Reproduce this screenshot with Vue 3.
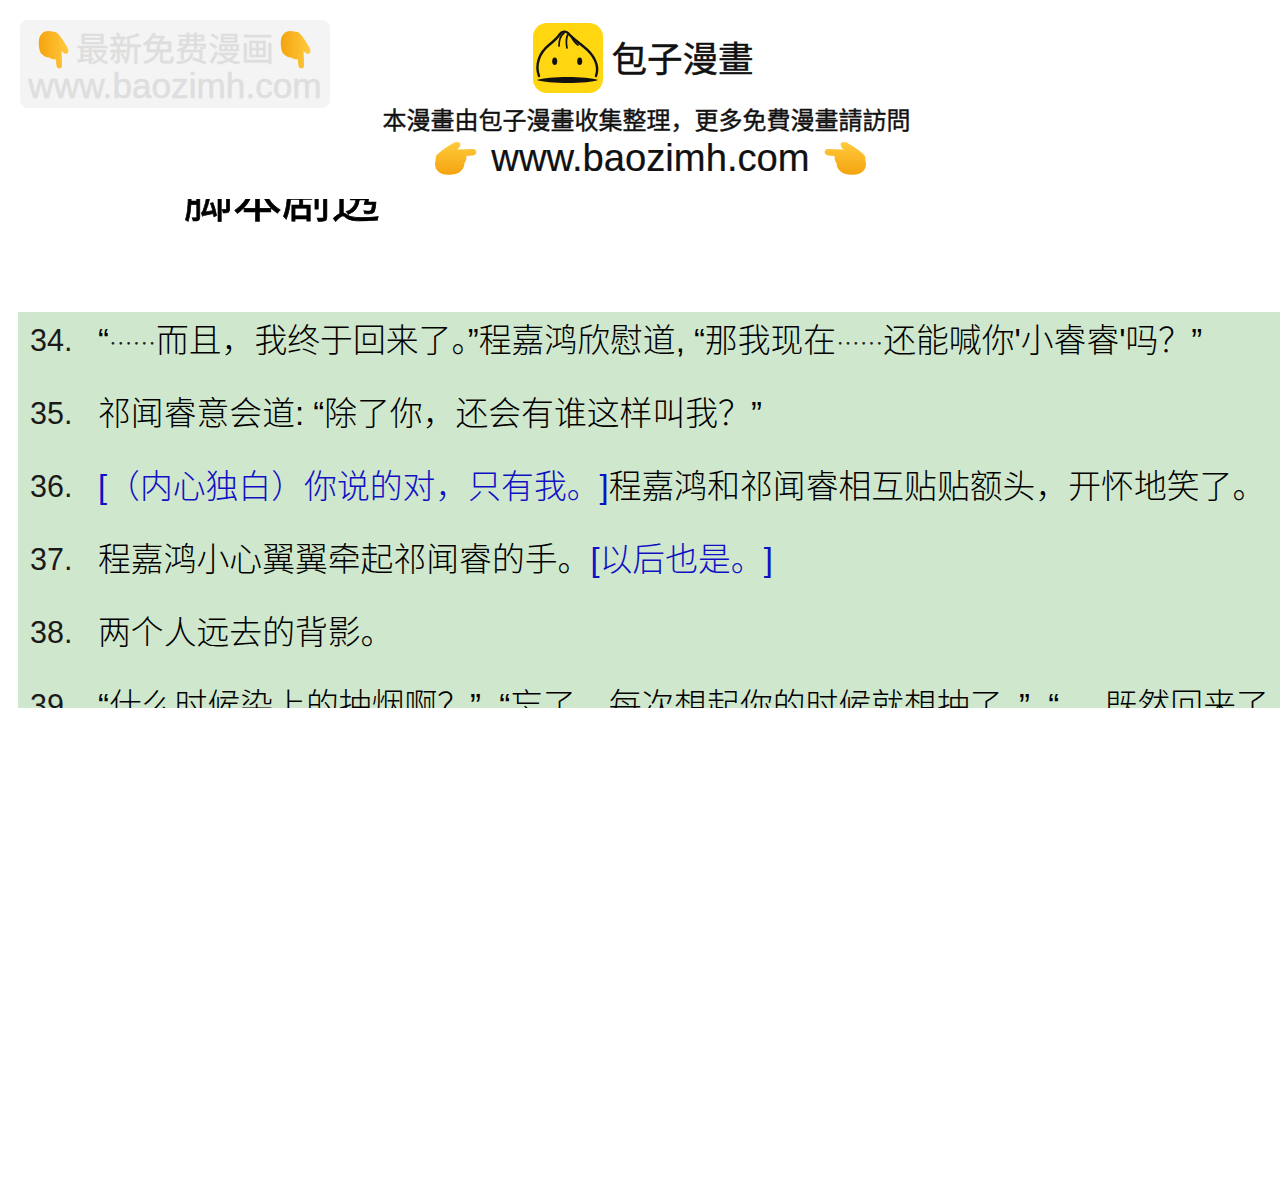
<script setup>
const handPath = 'M1 14C5 9 12 5 18 1.500C21 0 25 1 24 4C23.500 6 22 7 21 8L36 7.500C40.500 7.500 40.500 13 36 13.500L30 14C30 18 29 20 28 21C28 25 26 27 25 28C23 31 18 32 12 32C5 32 0 28 0 22Z'
const rows = [
  { n: '34.', parts: [
    { t: '“' }, { t: '……', k: 'ell' }, { t: '而且，我终于回来了。”程嘉鸿欣慰道, “那我现在' }, { t: '……', k: 'ell' }, { t: '还能喊你\'小睿睿\'吗？”' }
  ] },
  { n: '35.', parts: [{ t: '祁闻睿意会道: “除了你，还会有谁这样叫我？”' }] },
  { n: '36.', parts: [{ t: '[（内心独白）你说的对，只有我。]', k: 'blue' }, { t: '程嘉鸿和祁闻睿相互贴贴额头，开怀地笑了。' }] },
  { n: '37.', parts: [{ t: '程嘉鸿小心翼翼牵起祁闻睿的手。' }, { t: '[以后也是。]', k: 'blue' }] },
  { n: '38.', parts: [{ t: '两个人远去的背影。' }] },
  { n: '39.', parts: [{ t: '“什么时候染上的抽烟啊？”  “忘了，每次想起你的时候就想抽了。”  “     既然回来了' }] }
]
</script>

<template>
  <div class="page">
    <div class="watermark">
      <div class="wm-top">
        <svg class="hand wm-hand down" viewBox="0 -4 40 40"><path :d="handPath" fill="url(#handFill)" /></svg>
        <span>最新免费漫画</span>
        <svg class="hand wm-hand down" viewBox="0 -4 40 40"><path :d="handPath" fill="url(#handFill)" /></svg>
      </div>
      <div class="wm-url">www.baozimh.com</div>
    </div>

    <header class="banner">
      <div class="brand">
        <svg class="logo" viewBox="0 0 70 70">
          <defs>
            <linearGradient id="handFill" x1="0" y1="0" x2="0" y2="1">
              <stop offset="0" stop-color="#ffcb3d" />
              <stop offset="1" stop-color="#f5a30f" />
            </linearGradient>
          </defs>
          <rect width="70" height="70" rx="14" fill="#ffd60f" />
          <path d="M6 53C2 42 6 30 16 22C21 18 25 14 27 11C29 8 33 8 35 10C38 14 45 19 51 24C60 31 67 42 63 53" fill="none" stroke="#111" stroke-width="2.400" stroke-linecap="round" />
          <path d="M31 10C27 13 26 18 26 23M35 11C33 15 33 20 34 25M38 13C40 17 42 20 45 22" fill="none" stroke="#111" stroke-width="1.700" stroke-linecap="round" />
          <ellipse cx="21.700" cy="38.300" rx="2.500" ry="3.800" fill="#111" />
          <ellipse cx="46.700" cy="38.300" rx="2.500" ry="3.800" fill="#111" />
          <path d="M4 57C15 53 54 53 65 57C56 61 14 61 4 57Z" fill="#111" />
        </svg>
        <span class="brand-name">包子漫畫</span>
      </div>
      <p class="notice">本漫畫由包子漫畫收集整理，更多免費漫畫請訪問</p>
      <div class="site">
        <svg class="hand site-hand" viewBox="0 -4 40 40"><path :d="handPath" fill="url(#handFill)" /></svg>
        <span>www.baozimh.com</span>
        <svg class="hand site-hand flip" viewBox="0 -4 40 40"><path :d="handPath" fill="url(#handFill)" /></svg>
      </div>
    </header>

    <div class="title-clip">
      <h2>脚本剧透</h2>
    </div>

    <section class="panel">
      <div class="rows">
        <div v-for="row in rows" :key="row.n" class="row">
          <span class="num">{{ row.n }}</span>
          <span class="text"><span v-for="(p, i) in row.parts" :key="i" :class="p.k">{{ p.t }}</span></span>
        </div>
      </div>
    </section>
  </div>
</template>

<style scoped>
.page {
  position: relative;
  width: 1280px;
  min-height: 1200px;
  background: #fff;
  font-family: "Liberation Sans", "Noto Sans CJK SC", sans-serif;
  color: #111;
  overflow: hidden;
}
.watermark {
  position: absolute;
  left: 20px;
  top: 20px;
  width: 310px;
  height: 88px;
  box-sizing: border-box;
  padding-top: 12px;
  border-radius: 8px;
  background: #f4f4f4;
  color: #dedede;
  display: flex;
  flex-direction: column;
  align-items: center;
}
.wm-top {
  display: flex;
  align-items: center;
  gap: 3px;
  height: 36px;
  font-size: 33px;
  font-weight: 400;
  line-height: 36px;
  -webkit-text-stroke: 0.4px #dedede;
}
.wm-url {
  font-size: 35.200px;
  line-height: 36px;
  white-space: nowrap;
  -webkit-text-stroke: 0.5px #dedede;
}
.hand { display: block; flex: none; }
.wm-hand { width: 38px; height: 38px; }
.down { transform: rotate(90deg); }
.flip { transform: scaleX(-1); }
.banner {
  display: flex;
  flex-direction: column;
  align-items: center;
  padding-top: 23px;
  padding-left: 21px;
  height: 173px;
  box-sizing: border-box;
}
.brand {
  display: flex;
  align-items: center;
  gap: 8px;
  height: 70px;
  margin-right: 14px;
}
.logo { width: 70px; height: 70px; display: block; }
.brand-name {
  padding-top: 3px;
  font-size: 35.500px;
  font-weight: 400;
  line-height: 70px;
  -webkit-text-stroke: 0.5px #111;
}
.notice {
  margin: 12px 8px 0 0;
  font-size: 24px;
  line-height: 32px;
  font-weight: 400;
  white-space: nowrap;
  -webkit-text-stroke: 0.4px #111;
}
.site {
  display: flex;
  align-items: center;
  gap: 14px;
  height: 42px;
  font-size: 38.200px;
  white-space: nowrap;
  -webkit-text-stroke: 0.2px #111;
}
.site-hand { width: 42px; height: 42px; }
.title-clip {
  height: 113px;
  margin-top: 26px;
  padding-left: 184px;
  overflow: hidden;
}
.title-clip h2 {
  margin: -29px 0 0;
  font-size: 49px;
  line-height: 60px;
  font-weight: 400;
  color: #000;
  -webkit-text-stroke: 0.7px #000;
}
.panel {
  margin-left: 18px;
  height: 396px;
  background: #cfe7cc;
  overflow: hidden;
}
.rows { margin-top: -8px; padding-left: 12px; }
.row {
  display: flex;
  height: 73px;
  line-height: 73px;
  white-space: pre;
  color: #000;
}
.num { width: 68px; flex: none; font-size: 30.500px; color: #1a1a1a; }
.text { font-size: 32.850px; font-weight: 300; }
.blue { color: #1010c4; text-spacing-trim: space-all; }
.ell {
  font-family: "Noto Sans CJK SC", sans-serif;
  font-size: 23.500px;
  color: #222;
}
</style>
